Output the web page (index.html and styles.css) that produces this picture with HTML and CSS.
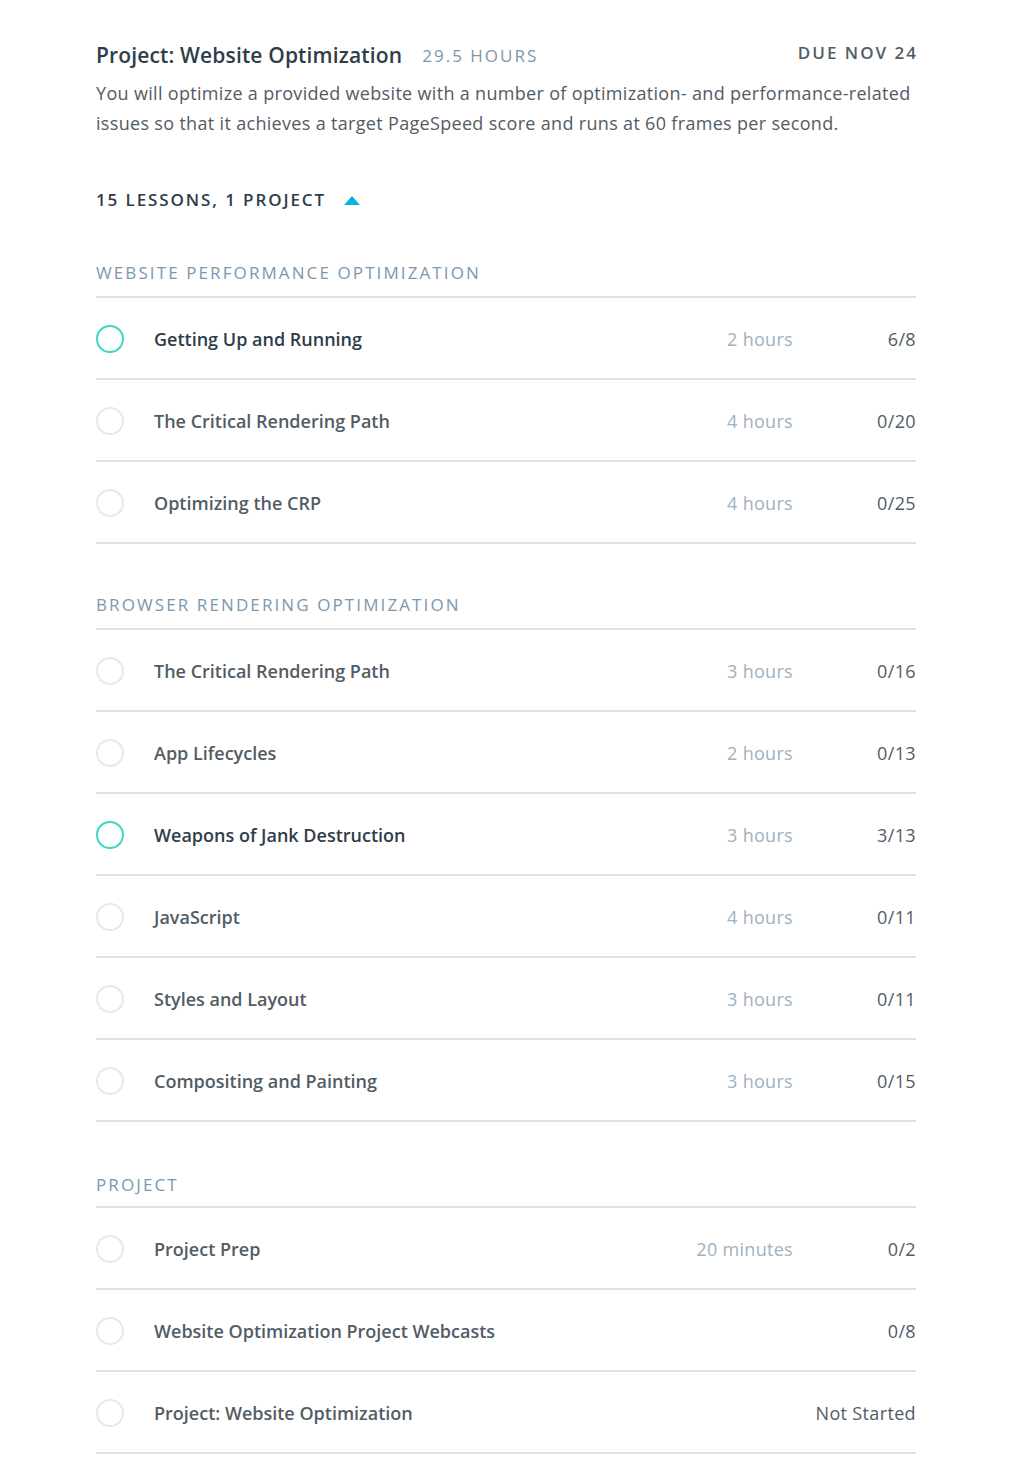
FILE: index.html
```html
<!DOCTYPE html>
<html>
<head>
<meta charset="utf-8">
<link rel="stylesheet" href="styles.css">
</head>
<body>
<main class="page">
  <header class="proj-head">
    <div class="title-row">
      <h1 class="title">Project: Website Optimization</h1>
      <span class="hours-total">29.5 HOURS</span>
      <span class="due">DUE NOV 24</span>
    </div>
    <p class="desc">You will optimize a provided website with a number of optimization- and performance-related issues so that it achieves a target PageSpeed score and runs at 60 frames per second.</p>
  </header>

  <div class="toggle">15 LESSONS, 1 PROJECT <span class="caret"></span></div>

  <section class="group">
    <h2 class="group-title">WEBSITE PERFORMANCE OPTIMIZATION</h2>
    <ul class="lessons">
      <li class="lesson active"><span class="dot"></span><span class="name">Getting Up and Running</span><span class="dur">2 hours</span><span class="prog">6/8</span></li>
      <li class="lesson"><span class="dot"></span><span class="name">The Critical Rendering Path</span><span class="dur">4 hours</span><span class="prog">0/20</span></li>
      <li class="lesson"><span class="dot"></span><span class="name">Optimizing the CRP</span><span class="dur">4 hours</span><span class="prog">0/25</span></li>
    </ul>
  </section>

  <section class="group">
    <h2 class="group-title">BROWSER RENDERING OPTIMIZATION</h2>
    <ul class="lessons">
      <li class="lesson"><span class="dot"></span><span class="name">The Critical Rendering Path</span><span class="dur">3 hours</span><span class="prog">0/16</span></li>
      <li class="lesson"><span class="dot"></span><span class="name">App Lifecycles</span><span class="dur">2 hours</span><span class="prog">0/13</span></li>
      <li class="lesson active"><span class="dot"></span><span class="name">Weapons of Jank Destruction</span><span class="dur">3 hours</span><span class="prog">3/13</span></li>
      <li class="lesson"><span class="dot"></span><span class="name">JavaScript</span><span class="dur">4 hours</span><span class="prog">0/11</span></li>
      <li class="lesson"><span class="dot"></span><span class="name">Styles and Layout</span><span class="dur">3 hours</span><span class="prog">0/11</span></li>
      <li class="lesson"><span class="dot"></span><span class="name">Compositing and Painting</span><span class="dur">3 hours</span><span class="prog">0/15</span></li>
    </ul>
  </section>

  <section class="group group-last">
    <h2 class="group-title">PROJECT</h2>
    <ul class="lessons">
      <li class="lesson"><span class="dot"></span><span class="name">Project Prep</span><span class="dur">20 minutes</span><span class="prog">0/2</span></li>
      <li class="lesson"><span class="dot"></span><span class="name">Website Optimization Project Webcasts</span><span class="dur"></span><span class="prog">0/8</span></li>
      <li class="lesson"><span class="dot"></span><span class="name">Project: Website Optimization</span><span class="dur"></span><span class="prog">Not Started</span></li>
    </ul>
  </section>
</main>
</body>
</html>
```

FILE: styles.css
```css
* { box-sizing: border-box; }
html, body { margin: 0; padding: 0; background: #ffffff; }
body {
  font-family: "Open Sans", "Noto Sans", sans-serif;
  color: #525c65;
}
.page {
  width: 820px;
  margin: 0 0 0 96px;
  padding: 40px 0 20px;
}
.title-row {
  display: flex;
  align-items: center;
  height: 30px;
}
.title {
  margin: 0;
  font-size: 21px;
  font-weight: 600;
  letter-spacing: 0.15px;
  color: #2e3d49;
  line-height: 30px;
}
.hours-total {
  margin-left: 20px;
  font-size: 17px;
  letter-spacing: 2px;
  color: #7d97ad;
  line-height: 30px;
  padding-top: 2px;
}
.due {
  margin-left: auto;
  font-size: 17px;
  font-weight: 600;
  letter-spacing: 2px;
  color: #525c65;
  line-height: 30px;
  margin-right: -2px;
  margin-top: -4px;
}
.desc {
  margin: 8px 0 0;
  font-size: 18px;
  letter-spacing: 0.32px;
  line-height: 30px;
  color: #525c65;
}
.toggle {
  margin-top: 50px;
  display: flex;
  align-items: center;
  font-size: 17px;
  font-weight: 600;
  letter-spacing: 1.9px;
  color: #2e3d49;
  line-height: 24px;
}
.caret {
  margin-left: 18px;
  width: 0;
  height: 0;
  border-left: 8px solid transparent;
  border-right: 8px solid transparent;
  border-bottom: 9px solid #02b3e4;
}
.group { margin-top: 49px; }
.group-last .group-title { padding-top: 2px; padding-bottom: 9px; }
.group-title {
  margin: 0;
  padding-bottom: 11px;
  border-bottom: 2px solid #dbe2e8;
  font-size: 17px;
  font-weight: 400;
  letter-spacing: 2.1px;
  line-height: 24px;
  color: #7d97ad;
}
.lessons { list-style: none; margin: 0; padding: 0; }
.lesson {
  display: grid;
  grid-template-columns: 28px 1fr auto 123px;
  align-items: center;
  height: 82px;
  padding-top: 2px;
  border-bottom: 2px solid #dbe2e8;
  font-size: 18px;
}
.dot {
  width: 28px;
  height: 28px;
  border-radius: 50%;
  border: 2px solid #e4e9ee;
}
.active .dot { border-color: #3fd6c6; }
.name {
  padding-left: 30px;
  color: #525c65;
  font-weight: 600;
}
.active .name { color: #2e3d49; }
.dur { color: #a0b1c0; text-align: right; letter-spacing: 0.3px; }
.prog { text-align: right; color: #525c65; letter-spacing: 0.35px; }
```
